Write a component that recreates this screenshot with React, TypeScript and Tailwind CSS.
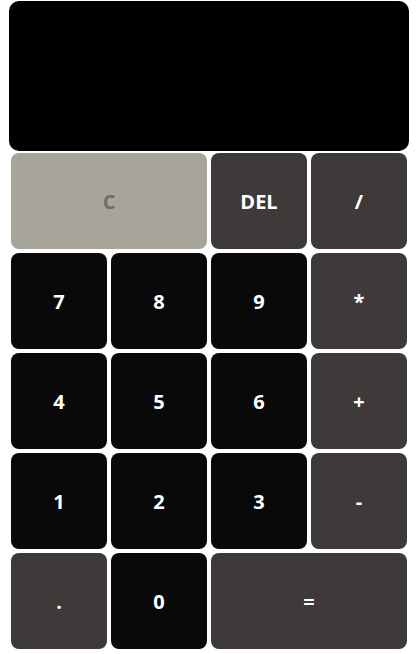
import React from "react";

type K = { label: string; cls: string; span?: boolean };

const dark = "bg-[#0a0909] text-white";
const op = "bg-[#3d3a39] text-white";

const keys: K[] = [
  { label: "C", cls: "bg-[#a7a499] text-[#6e6d68]", span: true },
  { label: "DEL", cls: op },
  { label: "/", cls: op },
  { label: "7", cls: dark },
  { label: "8", cls: dark },
  { label: "9", cls: dark },
  { label: "*", cls: op },
  { label: "4", cls: dark },
  { label: "5", cls: dark },
  { label: "6", cls: dark },
  { label: "+", cls: op },
  { label: "1", cls: dark },
  { label: "2", cls: dark },
  { label: "3", cls: dark },
  { label: "-", cls: op },
  { label: ".", cls: op },
  { label: "0", cls: dark },
  { label: "=", cls: op, span: true },
];

export default function App() {
  return (
    <div
      className="w-[416px] h-[654px] bg-white pl-[9px] pt-[1px]"
      style={{ fontFamily: '"Open Sans", "Liberation Sans", sans-serif' }}
    >
      <div className="w-[400px] h-[150px] bg-black rounded-[10px]" />
      <div className="grid grid-cols-[repeat(4,100px)] grid-rows-[repeat(5,100px)] w-[400px]">
        {keys.map((k, i) => (
          <button
            key={i}
            className={`m-[2px] rounded-[8px] flex items-center justify-center text-[20px] font-bold pt-[1px] ${k.cls} ${k.span ? "col-span-2" : ""}`}
          >
            {k.label}
          </button>
        ))}
      </div>
    </div>
  );
}
